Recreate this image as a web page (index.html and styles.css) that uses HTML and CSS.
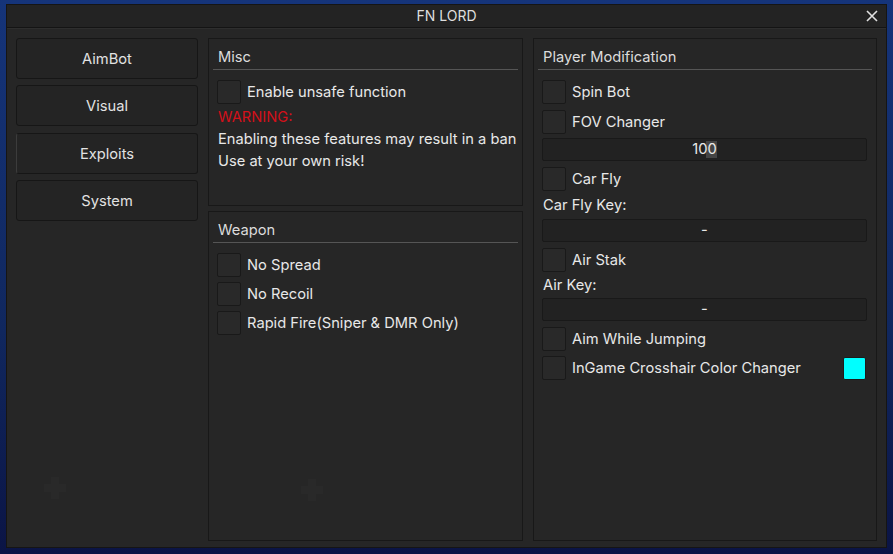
FILE: index.html
```html
<!DOCTYPE html>
<html>
<head>
<meta charset="utf-8">
<link rel="stylesheet" href="styles.css">
</head>
<body>
<div class="window">
  <div class="titlebar">
    <span></span>
    <span class="title">FN LORD</span>
    <span class="close"><svg width="12" height="12" viewBox="0 0 12 12"><path d="M1 1L11 11M11 1L1 11" stroke="#e0e0e0" stroke-width="1.6" fill="none"/></svg></span>
  </div>
  <div class="body">
    <div class="sidebar">
      <div class="tab">AimBot</div>
      <div class="tab">Visual</div>
      <div class="tab active">Exploits</div>
      <div class="tab">System</div>
      <div class="watermark wm-side"></div>
    </div>
    <div class="column mid">
      <div class="panel misc">
        <div class="phead">Misc</div>
        <div class="pcontent">
          <div class="row"><span class="cb"></span><span>Enable unsafe function</span></div>
          <div class="text warn">WARNING:</div>
          <div class="text">Enabling these features may result in a ban</div>
          <div class="text">Use at your own risk!</div>
        </div>
      </div>
      <div class="panel weapon">
        <div class="phead">Weapon</div>
        <div class="pcontent">
          <div class="row"><span class="cb"></span><span>No Spread</span></div>
          <div class="row"><span class="cb"></span><span>No Recoil</span></div>
          <div class="row"><span class="cb"></span><span>Rapid Fire(Sniper &amp; DMR Only)</span></div>
        </div>
        <div class="watermark wm-weapon"></div>
      </div>
    </div>
    <div class="column right">
      <div class="panel player">
        <div class="phead">Player Modification</div>
        <div class="pcontent">
          <div class="row"><span class="cb"></span><span>Spin Bot</span></div>
          <div class="row"><span class="cb"></span><span>FOV Changer</span></div>
          <div class="field slider"><span class="grab"></span><span class="val">100</span></div>
          <div class="row"><span class="cb"></span><span>Car Fly</span></div>
          <div class="label">Car Fly Key:</div>
          <div class="field">-</div>
          <div class="row"><span class="cb"></span><span>Air Stak</span></div>
          <div class="label">Air Key:</div>
          <div class="field">-</div>
          <div class="row"><span class="cb"></span><span>Aim While Jumping</span></div>
          <div class="row"><span class="cb"></span><span class="grow">InGame Crosshair Color Changer</span><span class="swatch"></span></div>
        </div>
      </div>
    </div>
  </div>
</div>
</body>
</html>
```
FILE: styles.css
```css
html, body {
  margin: 0;
  padding: 0;
}
body {
  width: 893px;
  height: 554px;
  overflow: hidden;
  background: linear-gradient(180deg, #15347a 0%, #10275e 60%, #0b1445 100%);
  font-family: Inter, "Noto Sans", sans-serif;
  font-size: 14.7px;
  font-weight: 400;
  color: #e8e8e8;
  white-space: nowrap;
}
.window {
  margin: 4px 0 0 6px;
  width: 879px;
  height: 542px;
  border: 1px solid #151515;
  background: #262626;
  display: flex;
  flex-direction: column;
}
.titlebar {
  height: 22px;
  border-bottom: 1px solid #141414;
  box-shadow: 0 1px 0 #2e2e2e;
  background: #232323;
  display: grid;
  grid-template-columns: 1fr auto 1fr;
  align-items: center;
}
.title {
  font-size: 14px;
  color: #dedede;
  margin-top: -1px;
}
.close {
  justify-self: end;
  margin-right: 8px;
  display: flex;
}
.body {
  flex: 1;
  display: flex;
  gap: 10px;
  padding: 10px 8px 6px 9px;
}
.sidebar {
  width: 182px;
  display: flex;
  flex-direction: column;
  gap: 6px;
  position: relative;
}
.tab {
  box-sizing: border-box;
  height: 41px;
  padding-top: 1px;
  border: 1px solid #161616;
  border-radius: 3px;
  background: #242424;
  display: flex;
  align-items: center;
  justify-content: center;
  color: #e2e2e2;
}
.tab:nth-child(3) { margin-top: 1px; }
.tab.active {
  border-left-color: #3c3c3c;
}
.column {
  display: flex;
  flex-direction: column;
  gap: 5px;
}
.mid { width: 315px; }
.right { width: 344px; }
.panel {
  border: 1px solid #181818;
  background: #262626;
  padding: 0 4px;
  position: relative;
}
.misc { height: 166px; }
.weapon { flex: 1; }
.player { flex: 1; }
.phead {
  height: 22px;
  padding: 8px 0 0 5px;
  line-height: 20px;
  border-bottom: 1px solid #555;
  color: #dcdcdc;
}
.pcontent {
  padding: 10px 5px 0 4px;
  display: flex;
  flex-direction: column;
  gap: 5px;
}
.misc .pcontent { gap: 0; }
.player .pcontent { gap: 0; }
.player .pcontent > :nth-child(2) { margin-top: 6px; }
.player .pcontent > :nth-child(3) { margin-top: 4px; }
.player .pcontent > :nth-child(4) { margin-top: 6px; }
.player .pcontent > :nth-child(5) { margin-top: 5px; }
.player .pcontent > :nth-child(6) { margin-top: 5px; }
.player .pcontent > :nth-child(7) { margin-top: 6px; }
.player .pcontent > :nth-child(8) { margin-top: 4px; }
.player .pcontent > :nth-child(9) { margin-top: 4px; }
.player .pcontent > :nth-child(10) { margin-top: 6px; }
.player .pcontent > :nth-child(11) { margin-top: 5px; }
.row {
  display: flex;
  align-items: center;
  gap: 6px;
  height: 24px;
}
.row span:not(.cb):not(.swatch) { margin-top: -1px; }
.cb {
  width: 22px;
  height: 22px;
  border: 1px solid #191919;
  border-radius: 2px;
  background: #292929;
  flex: none;
}
.text {
  line-height: 22px;
  padding-left: 1px;
}
.warn {
  color: #d3101a;
  margin-top: 2px;
}
.grow { flex: 1; }
.swatch {
  width: 21px;
  height: 21px;
  background: #00ffff;
  border: 1px solid #1c1c1c;
  border-radius: 2px;
  margin-right: 1px;
}
.label {
  height: 18px;
  line-height: 18px;
  padding-left: 1px;
}
.field {
  height: 21px;
  border: 1px solid #191919;
  border-radius: 2px;
  background: #222;
  display: flex;
  align-items: center;
  justify-content: center;
  position: relative;
  line-height: 21px;
}
.slider .grab {
  position: absolute;
  left: calc(50% + 1px);
  top: 2px;
  width: 11px;
  height: 17px;
  background: #454545;
}
.slider .val {
  position: relative;
}
.watermark {
  position: absolute;
  width: 8px;
  height: 22px;
  background: #292929;
}
.watermark::after {
  content: "";
  position: absolute;
  left: -7px;
  top: 7px;
  width: 22px;
  height: 8px;
  background: #292929;
}
.wm-side { left: 35px; top: 439px; }
.wm-weapon { left: 99px; top: 267px; }
```
